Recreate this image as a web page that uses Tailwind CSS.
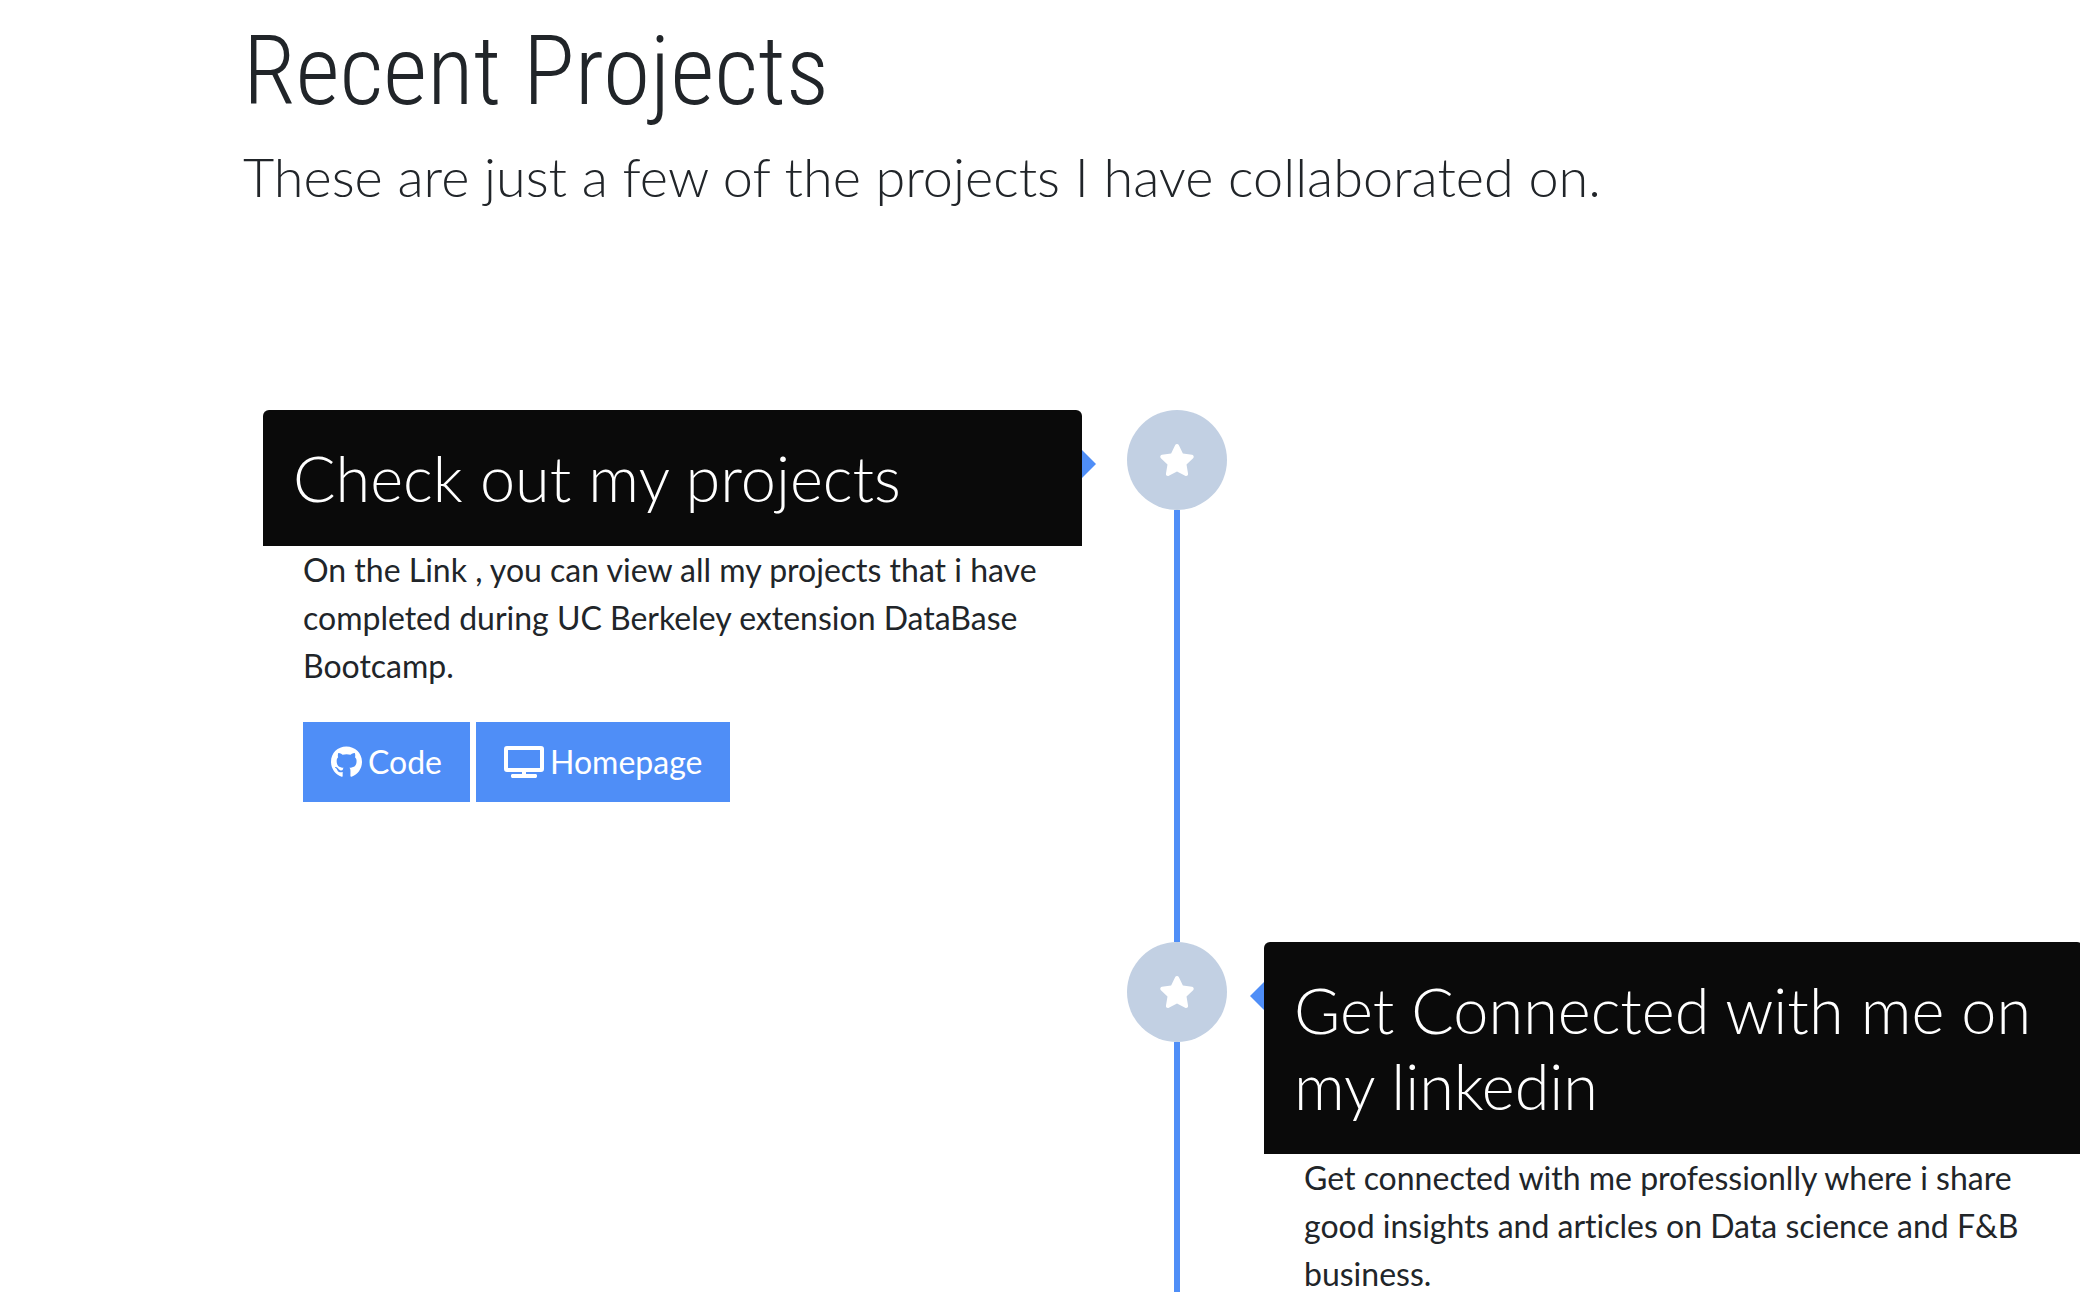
<!DOCTYPE html>
<html lang="en">
<head>
<meta charset="utf-8">
<title>Recent Projects</title>
<script src="https://cdn.jsdelivr.net/npm/@tailwindcss/browser@4"></script>
</head>
<body class="bg-white font-['Lato',sans-serif] text-[32px] leading-[48px] text-[#212529] [font-variant-ligatures:none]">
<svg class="hidden">
  <symbol id="star" viewBox="0 0 576 512"><path fill="currentColor" d="M259.3 17.8L194 150.2 47.9 171.5c-26.2 3.8-36.7 36.1-17.7 54.6l105.7 103-25 145.5c-4.5 26.3 23.2 46 46.4 33.7L288 439.6l130.7 68.7c23.2 12.2 50.9-7.4 46.4-33.7l-25-145.5 105.7-103c19-18.5 8.5-50.8-17.7-54.6L382 150.2 316.700 17.8c-11.7-23.600-45.600-23.900-57.400 0z"/></symbol>
</svg>
<main class="overflow-hidden pt-[14px]">
  <header class="px-[243px]">
    <h1 class="font-['Roboto_Condensed',sans-serif] text-[96px] leading-[115px] font-light">Recent Projects</h1>
    <p class="mt-[14px] text-[54px] leading-[67px] font-light">These are just a few of the projects I have collaborated on.</p>
  </header>

  <section class="-mr-[3px] ml-[263px] pt-[200px]">
    <article class="grid min-h-[532px] grid-cols-[1fr_182px_1fr]">
      <div>
        <div class="relative rounded-t-md bg-[#0a0a0a] p-[30px]">
          <h2 class="text-[63px] leading-[76px] font-light text-white">Check out my projects</h2>
          <span class="absolute top-10 left-full border-y-14 border-l-14 border-y-transparent border-l-[#4f8ef7]"></span>
        </div>
        <div class="px-10">
          <p>On the Link , you can view all my projects that i have completed during UC Berkeley extension DataBase Bootcamp.</p>
          <div class="mt-8 flex gap-1.5">
            <a href="#code" class="flex h-20 items-center gap-1.5 bg-[#4f8ef7] px-7 text-white">
              <svg class="h-8 w-[31px]" viewBox="0 0 496 512"><path fill="currentColor" d="M165.900 397.400c0 2-2.300 3.600-5.200 3.600-3.300.3-5.600-1.300-5.600-3.600 0-2 2.300-3.600 5.200-3.600 3-.3 5.600 1.300 5.600 3.600zM244.800 8C106.100 8 0 113.300 0 252c0 110.900 69.800 205.800 169.500 239.200 12.800 2.300 17.300-5.600 17.300-12.100 0-6.200-.3-40.400-.3-61.400 0 0-70 15-84.700-29.800 0 0-11.400-29.100-27.800-36.600 0 0-22.900-15.700 1.600-15.400 0 0 24.900 2 38.600 25.800 21.900 38.600 58.600 27.500 72.900 20.900 2.300-16 8.800-27.100 16-33.700-55.900-6.200-112.300-14.300-112.300-110.500 0-27.500 7.600-41.300 23.600-58.900-2.600-6.500-11.100-33.300 2.600-67.900 20.900-6.500 69 27 69 27 20-5.600 41.500-8.500 62.800-8.500s42.800 2.900 62.800 8.500c0 0 48.100-33.600 69-27 13.700 34.700 5.200 61.400 2.600 67.900 16 17.700 25.800 31.500 25.800 58.900 0 96.500-58.900 104.200-114.800 110.500 9.200 7.900 17 22.900 17 46.400 0 33.700-.3 75.400-.3 83.600 0 6.500 4.600 14.400 17.300 12.100C428.200 457.800 496 362.900 496 252 496 113.300 383.500 8 244.800 8z"/></svg>
              <span>Code</span>
            </a>
            <a href="#homepage" class="flex h-20 items-center gap-1.5 bg-[#4f8ef7] px-7 text-white">
              <svg class="h-8 w-10" viewBox="0 0 640 512"><path fill="currentColor" d="M592 0H48A48 48 0 0 0 0 48v320a48 48 0 0 0 48 48h240v32H128a32 32 0 0 0-16 16v16a32 32 0 0 0 16 32h384a32 32 0 0 0 16-32v-16a32 32 0 0 0-16-16H352v-32h240a48 48 0 0 0 48-48V48a48 48 0 0 0-48-48zm-16 352H64V64h512v288z"/></svg>
              <span>Homepage</span>
            </a>
          </div>
        </div>
      </div>
      <div class="flex flex-col items-center pl-2">
        <div class="grid size-25 place-items-center rounded-full bg-[#c2d0e3] text-white"><svg class="h-8 w-9"><use href="#star"/></svg></div>
        <div class="w-1.5 grow bg-[#4f8ef7]"></div>
      </div>
    </article>

    <article class="grid grid-cols-[1fr_182px_1fr]">
      <div class="col-start-2 flex flex-col items-center pl-2">
        <div class="grid size-25 place-items-center rounded-full bg-[#c2d0e3] text-white"><svg class="h-8 w-9"><use href="#star"/></svg></div>
        <div class="w-1.5 grow bg-[#4f8ef7]"></div>
      </div>
      <div>
        <div class="relative rounded-t-md bg-[#0a0a0a] p-[30px]">
          <h2 class="text-[63px] leading-[76px] font-light text-white">Get Connected with me on my linkedin</h2>
          <span class="absolute top-10 right-full border-y-14 border-r-14 border-y-transparent border-r-[#4f8ef7]"></span>
        </div>
        <p class="px-10">Get connected with me professionlly where i share good insights and articles on Data science and F&amp;B business.</p>
      </div>
    </article>
  </section>
</main>
</body>
</html>
